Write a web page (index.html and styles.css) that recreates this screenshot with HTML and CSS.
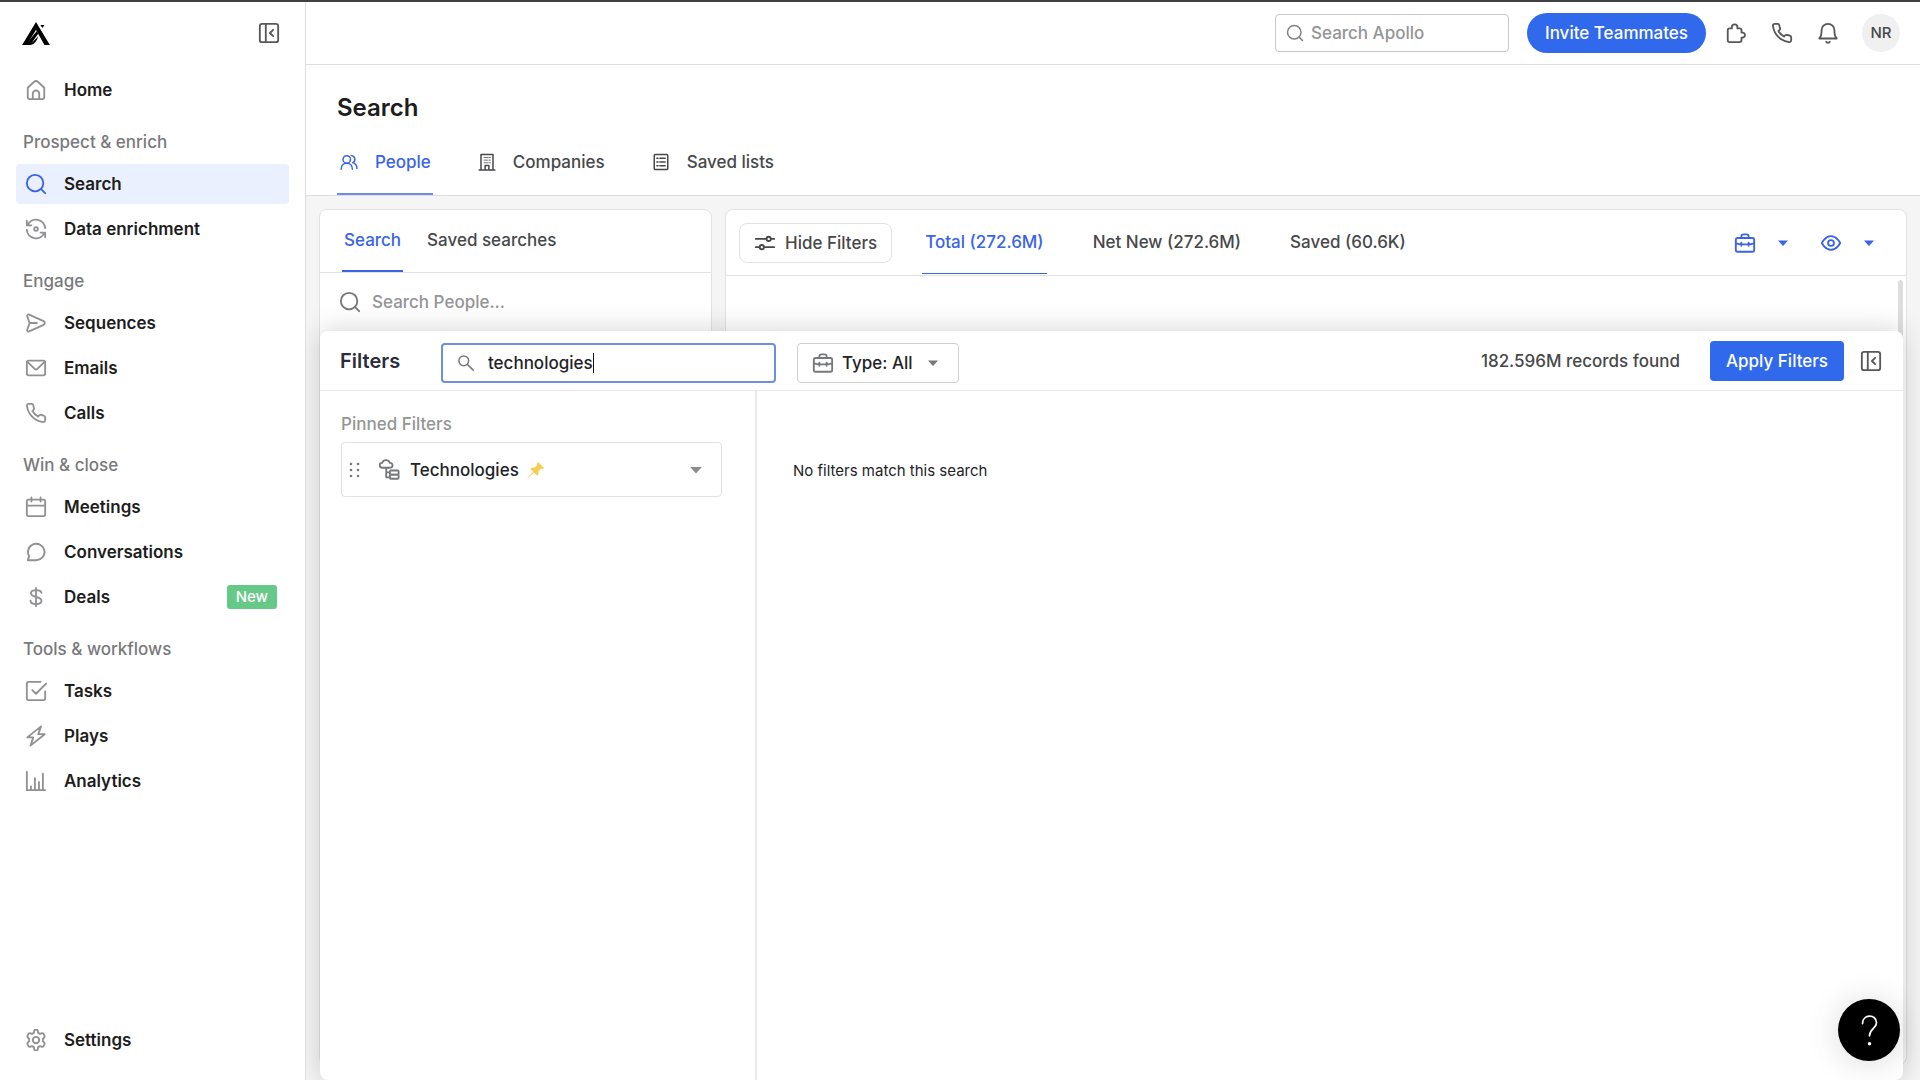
FILE: index.html
```html
<!DOCTYPE html>
<html lang="en">
<head>
<meta charset="utf-8">
<meta name="viewport" content="width=device-width, initial-scale=1">
<title>Search - Apollo</title>
<link rel="stylesheet" href="styles.css">
</head>
<body>
<svg class="sprite" aria-hidden="true">
  <symbol id="i-panel" viewBox="0 0 24 24"><rect x="2" y="2" width="20" height="20" rx="2.5"/><path d="M8.5 2v20M16.500 8.500L13 12l3.500 3.500"/></symbol>
  <symbol id="i-search" viewBox="0 0 24 24"><circle cx="11" cy="11" r="9"/><path d="M17.500 17.500L22 22"/></symbol>
  <symbol id="i-phone" viewBox="0 0 24 24"><path d="M22 16.900v3a2 2 0 0 1-2.200 2A19.800 19.800 0 0 1 11.200 18.900a19.500 19.500 0 0 1-6-6A19.800 19.800 0 0 1 2.100 4.200 2 2 0 0 1 4.100 2h3a2 2 0 0 1 2 1.700c.13 1 .36 1.900.7 2.800a2 2 0 0 1-.45 2.100L8.100 9.900a16 16 0 0 0 6 6l1.300-1.300a2 2 0 0 1 2.100-.45c.9.340 1.900.570 2.800.7A2 2 0 0 1 22 16.900z"/></symbol>
  <symbol id="i-case" viewBox="0 0 24 24"><rect x="2" y="6.500" width="20" height="15" rx="2"/><path d="M8 6.500V5a2.500 2.500 0 0 1 2.500-2.500h3A2.500 2.500 0 0 1 16 5v1.500M2.500 12.500c2 .8 3.500 1 6 1M9 13.500h6M15.500 13.500c2.500 0 4-.2 6-1M8 11.500v3.500M16 11.500v3.500"/></symbol>
  <symbol id="i-caret" viewBox="0 0 12 12"><path d="M1 3.500h10L6 9z"/></symbol>
</svg>
<div class="app">
  <aside class="sidebar">
    <div class="brand">
      <a href="#" aria-label="Apollo"><svg class="logo" viewBox="0 0 82 68"><path d="M41 0L82 68H66L41 24L13 68H0z"/><path d="M10 68L43 27L48 34L28 62L48 42L44 52Q36 68 24 68z"/><path d="M54 9h12l-6 9z"/></svg></a>
      <button class="icon-btn" aria-label="Collapse sidebar"><svg class="icon"><use href="#i-panel"/></svg></button>
    </div>
    <nav class="nav">
      <a class="nav-item" href="#"><svg class="icon" viewBox="0 0 24 24"><path d="M3 9.500L10 3a3 3 0 0 1 4 0l7 6.500V20a2 2 0 0 1-2 2H5a2 2 0 0 1-2-2zM8.500 22v-6a3.500 3.500 0 0 1 7 0v6"/></svg>Home</a>
      <h2 class="nav-label">Prospect &amp; enrich</h2>
      <a class="nav-item active" href="#"><svg class="icon"><use href="#i-search"/></svg>Search</a>
      <a class="nav-item" href="#"><svg class="icon" viewBox="0 0 24 24"><path d="M2 3v5h5M3 7.500A10 10 0 0 1 22 11M22 21v-5h-5M21 16.500A10 10 0 0 1 2 13"/><circle cx="12" cy="12" r="2"/></svg>Data enrichment</a>
      <h2 class="nav-label">Engage</h2>
      <a class="nav-item" href="#"><svg class="icon" viewBox="0 0 24 24"><path d="M4.500 2.800l15.800 7.200a2.200 2.200 0 0 1 0 4L4.500 21.200a1.500 1.500 0 0 1-2-2L5 12 2.500 4.800a1.500 1.500 0 0 1 2-2zM5 12h8"/></svg>Sequences</a>
      <a class="nav-item" href="#"><svg class="icon" viewBox="0 0 24 24"><rect x="2" y="4" width="20" height="16" rx="2"/><path d="M2.500 5l8 8a2 2 0 0 0 3 0l8-8"/></svg>Emails</a>
      <a class="nav-item" href="#"><svg class="icon"><use href="#i-phone"/></svg>Calls</a>
      <h2 class="nav-label">Win &amp; close</h2>
      <a class="nav-item" href="#"><svg class="icon" viewBox="0 0 24 24"><rect x="2" y="4" width="20" height="18" rx="2"/><path d="M2 10.500h20M7 1.500V6M17 1.500V6"/></svg>Meetings</a>
      <a class="nav-item" href="#"><svg class="icon" viewBox="0 0 24 24"><path d="M3 21l1.500-4.500A9 9 0 1 1 12 21z"/></svg>Conversations</a>
      <a class="nav-item" href="#"><svg class="icon" viewBox="0 0 24 24"><path d="M12 2v20M18 7.500C17.500 5 15 4.500 12 4.500S6.500 5.500 6.500 8s2 3.200 5.500 4 6 1.500 6 4.200-2.800 3.600-6 3.600-5.700-.8-6-3.800"/></svg>Deals<span class="badge">New</span></a>
      <h2 class="nav-label">Tools &amp; workflows</h2>
      <a class="nav-item" href="#"><svg class="icon" viewBox="0 0 24 24"><path d="M22 12.500V20a2 2 0 0 1-2 2H4a2 2 0 0 1-2-2V4a2 2 0 0 1 2-2h13M8 11l4 4L23 4"/></svg>Tasks</a>
      <a class="nav-item" href="#"><svg class="icon" viewBox="0 0 24 24"><path d="M17.500 1.500L2.500 13.500H9L6 22.500 21.500 10H14.500z"/></svg>Plays</a>
      <a class="nav-item" href="#"><svg class="icon" viewBox="0 0 24 24"><path d="M2 2v20h20M6.500 22v-4M10.800 22V9M15.200 22v-9M19.500 22V4"/></svg>Analytics</a>
    </nav>
    <a class="nav-item settings" href="#"><svg class="icon" viewBox="0 0 24 24"><path d="M10 2.500a2 2 0 0 1 4 0l.3 1.700 2 1.100 1.700-.6a2 2 0 0 1 2.300.8l.9 1.700a2 2 0 0 1-.5 2.300L19.500 10.800v2.400l1.200 1.300a2 2 0 0 1 .5 2.300l-.9 1.700a2 2 0 0 1-2.300.8l-1.700-.6-2 1.100-.3 1.700a2 2 0 0 1-4 0l-.3-1.700-2-1.100-1.700.6a2 2 0 0 1-2.300-.8l-.9-1.700a2 2 0 0 1 .5-2.300l1.200-1.300v-2.400L3.300 9.500a2 2 0 0 1-.5-2.300l.9-1.700A2 2 0 0 1 6 4.700l1.700.6 2-1.100z"/><circle cx="12" cy="12" r="3.500"/></svg>Settings</a>
  </aside>

  <main class="main">
    <header class="topbar">
      <label class="global-search"><svg class="icon small"><use href="#i-search"/></svg><input type="search" placeholder="Search Apollo" aria-label="Search Apollo"></label>
      <button class="btn pill">Invite Teammates</button>
      <button class="icon-btn" aria-label="Extensions"><svg class="icon" viewBox="0 0 24 24"><path d="M3 9a2 2 0 0 1 2-2h2.500V5.500a3 3 0 0 1 6 0V7H16a2 2 0 0 1 2 2v2.500h1.500a2.800 2.800 0 0 1 0 5.500H18v3a2 2 0 0 1-2 2H5a2 2 0 0 1-2-2z"/></svg></button>
      <button class="icon-btn" aria-label="Dialer"><svg class="icon"><use href="#i-phone"/></svg></button>
      <button class="icon-btn" aria-label="Notifications"><svg class="icon" viewBox="0 0 24 24"><path d="M2.500 18C5 15.500 5 13.500 5 9a7 7 0 0 1 14 0c0 4.500 0 6.500 2.500 9zM10 21.500a2.200 2.200 0 0 0 4 0"/></svg></button>
      <button class="avatar">NR</button>
    </header>

    <section class="page-head">
      <h1>Search</h1>
      <nav class="page-tabs">
        <a class="tab active" href="#"><svg class="icon small" viewBox="0 0 24 24"><circle cx="9" cy="8.500" r="5"/><path d="M1.500 21.500c0-4.500 3-8 7.500-8s7.500 3.500 7.500 8M15 3.500a5 5 0 0 1 2 9.500M18.500 13.500c2.500 1 4 4 4 7"/></svg>People</a>
        <a class="tab" href="#"><svg class="icon small" viewBox="0 0 24 24"><path d="M1.500 22.500h21M4 22V2h16v20M9.500 22v-5.500h5V22"/><path class="dots" d="M8 6h2M11 6h2M14.500 6h2M8 9.500h2M11 9.500h2M14.500 9.500h2M8 13h2M11 13h2M14.500 13h2"/></svg>Companies</a>
        <a class="tab" href="#"><svg class="icon small" viewBox="0 0 24 24"><rect x="3" y="2" width="18" height="20" rx="1.500"/><path d="M10.500 7h7M10.500 12h7M10.500 17h7M6.500 7H8M6.500 12H8M6.500 17H8"/></svg>Saved lists</a>
      </nav>
    </section>

    <div class="workspace">
      <section class="card search-card">
        <nav class="card-tabs">
          <a class="card-tab active" href="#">Search</a>
          <a class="card-tab" href="#">Saved searches</a>
        </nav>
        <label class="people-search"><svg class="icon"><use href="#i-search"/></svg><input type="search" placeholder="Search People..." aria-label="Search People"></label>
      </section>

      <section class="card results-card">
        <div class="results-bar">
          <button class="hide-filters"><svg class="icon" viewBox="0 0 24 24"><path d="M2 7.500h11.500M18.500 7.500H22M2 16.500h4M11 16.500h11"/><circle cx="16" cy="7.500" r="2.300"/><circle cx="8.500" cy="16.500" r="2.300"/></svg>Hide Filters</button>
          <nav class="result-tabs">
            <a class="result-tab active" href="#">Total (272.6M)</a>
            <a class="result-tab" href="#">Net New (272.6M)</a>
            <a class="result-tab" href="#">Saved (60.6K)</a>
          </nav>
          <div class="view-tools">
            <button class="tool" aria-label="Job options"><svg class="icon"><use href="#i-case"/></svg><svg class="caret"><use href="#i-caret"/></svg></button>
            <button class="tool" aria-label="View options"><svg class="icon" viewBox="0 0 24 24"><path d="M2 12s3.500-7.500 10-7.500S22 12 22 12s-3.500 7.500-10 7.500S2 12 2 12z"/><circle cx="12" cy="12" r="3.200"/></svg><svg class="caret"><use href="#i-caret"/></svg></button>
          </div>
        </div>
        <div class="results-body"><div class="scroll-thumb"></div></div>
      </section>

      <section class="filters-panel">
        <header class="filters-head">
          <h2>Filters</h2>
          <label class="filter-search">
            <svg class="icon small" viewBox="0 0 24 24"><circle cx="9" cy="9" r="6.500"/><path d="M14 14l7.500 7.500"/></svg>
            <input type="text" value="technologies" aria-label="Search filters"><span class="text-cursor"></span>
          </label>
          <label class="type-select">
            <svg class="icon"><use href="#i-case"/></svg>
            <select aria-label="Filter type"><option>Type: All</option></select>
            <svg class="caret"><use href="#i-caret"/></svg>
          </label>
          <p class="records">182.596M records found</p>
          <button class="btn apply">Apply Filters</button>
          <button class="icon-btn" aria-label="Collapse filters"><svg class="icon"><use href="#i-panel"/></svg></button>
        </header>
        <div class="filters-body">
          <div class="pinned">
            <h3>Pinned Filters</h3>
            <button class="pinned-item">
              <svg class="grip" viewBox="0 0 12 16"><circle cx="2" cy="2" r="1.300"/><circle cx="9" cy="2" r="1.300"/><circle cx="2" cy="8" r="1.300"/><circle cx="9" cy="8" r="1.300"/><circle cx="2" cy="14" r="1.300"/><circle cx="9" cy="14" r="1.300"/></svg>
              <svg class="icon" viewBox="0 0 24 24"><path d="M4.500 9.500a2.600 2.600 0 0 1 0-5.200 4.500 4.500 0 0 1 8.500 0 2.600 2.600 0 0 1 .5 5.200zM9 9.500V20h4M9 14.500h4"/><rect x="13" y="12.500" width="9.500" height="4.500" rx="1"/><rect x="13" y="17" width="9.500" height="4.500" rx="1"/></svg>
              <span>Technologies</span>
              <svg class="pin" viewBox="0 0 16 16"><path d="M10 0L16 6 14.500 7 13 6.800 10.500 9.300 10.300 12.500 9 13.500 6 10.500 .5 15.500 0 15 5.200 9.700 2.500 7 3.500 5.700 6.700 5.500 9.200 3 9 1.500z"/></svg>
              <svg class="caret"><use href="#i-caret"/></svg>
            </button>
          </div>
          <div class="matches"><p>No filters match this search</p></div>
        </div>
      </section>
    </div>
  </main>
</div>
<button class="help" aria-label="Help"><svg viewBox="0 0 24 40"><path d="M4 12C4 1 20 1 20 11c0 7-8 7-8 15"/><circle cx="12" cy="35" r="1"/></svg></button>
</body>
</html>
```
FILE: styles.css
```css
* { box-sizing: border-box; }
body {
  margin: 0;
  border-top: 2px solid #403f41;
  font: 500 17px/24px Inter, "Liberation Sans", sans-serif;
  color: #47484a;
  background: #fff;
}
a { color: inherit; text-decoration: none; }
h1, h2, h3, p { margin: 0; font-weight: 500; font-size: 17px; }
button, input, select { font: inherit; color: inherit; background: none; border: 0; padding: 0; margin: 0; outline: 0; }
button { cursor: pointer; }
select { appearance: none; }
input { min-width: 0; width: 100%; }
input::placeholder { color: #949596; opacity: 1; }
.sprite { display: none; }
.icon { width: 24px; height: 24px; padding: 1px; flex: none; fill: none; stroke: currentColor; stroke-width: 2; stroke-linecap: round; stroke-linejoin: round; }
.icon.small { width: 20px; height: 20px; }
.caret { width: 12px; height: 12px; flex: none; fill: currentColor; }
.icon-btn { display: flex; color: #57585a; }

.app { display: flex; height: calc(100vh - 2px); }

.sidebar { flex: none; width: 306px; display: flex; flex-direction: column; padding: 16px 16px 20px; border-right: 1px solid #dededf; }
.brand { display: flex; justify-content: space-between; align-items: center; height: 30px; padding: 0 8px 0 6px; }
.brand a { display: flex; }
.logo { width: 28px; height: 23px; fill: #000; }
.nav { display: flex; flex-direction: column; gap: 5px; padding-top: 22px; }
.nav-item { display: flex; align-items: center; gap: 16px; height: 40px; padding: 0 12px 0 8px; border-radius: 4px; font-weight: 600; color: #1d1d20; }
.nav-item .icon { color: #919194; }
.nav-item.active { background: #eaf0fd; }
.nav-item.active .icon { color: #3a63e8; }
.nav-label { height: 44px; padding: 15px 7px 0; color: #79797c; }
.badge { margin-left: auto; padding: 0 9px; border-radius: 3px; background: #67c988; color: #fff; font-size: 15px; font-weight: 500; }
.settings { margin-top: auto; }

.main { flex: 1; min-width: 0; display: flex; flex-direction: column; overflow: hidden; }
.topbar { flex: none; display: flex; align-items: center; justify-content: flex-end; gap: 22px; height: 63px; padding: 0 20px; border-bottom: 1px solid #dededf; }
.global-search { display: flex; align-items: center; gap: 6px; width: 234px; height: 38px; margin-right: -4px; padding: 0 9px; border: 1px solid #c6c7c9; border-radius: 4px; color: #808184; }
.btn { height: 40px; padding: 0 16px; border-radius: 4px; background: #3069ec; color: #fff; font-weight: 500; }
.btn.pill { padding: 0 18px; border-radius: 20px; margin-right: -4px; }
.avatar { width: 38px; height: 38px; border-radius: 50%; background: #f0f0f1; font-size: 15px; }

.page-head { flex: none; padding: 27px 31px 0; border-bottom: 1px solid #dededf; }
.page-head h1 { font-size: 24px; line-height: 32px; font-weight: 600; color: #1d1d20; }
.page-tabs { display: flex; gap: 42px; margin-top: 7px; }
.tab { display: flex; align-items: center; gap: 16px; height: 64px; padding: 0 2px; border-bottom: 2px solid transparent; }
.tab .dots { stroke-width: 1; }
.tab.active { color: #3a63e8; border-color: #6c8fe0; }

.workspace { position: relative; flex: 1; min-height: 0; display: flex; gap: 13px; padding: 13px 13px 15px; background: #f5f5f6; }
.card { background: #fff; border: 1px solid #e2e2e4; border-radius: 8px; }
.search-card { flex: none; width: 393px; }
.card-tabs { display: flex; gap: 22px; padding: 0 22px; border-bottom: 1px solid #e2e2e4; }
.card-tab { height: 62px; padding: 18px 2px 0; border-bottom: 2px solid transparent; }
.card-tab.active { color: #3a63e8; border-color: #3a63e8; }
.people-search { display: flex; align-items: center; gap: 10px; height: 58px; padding: 0 18px; color: #77787a; }
.results-card { flex: 1; min-width: 0; }
.results-bar { display: flex; align-items: center; gap: 30px; height: 66px; padding: 0 31px 0 13px; border-bottom: 1px solid #e2e2e4; }
.hide-filters { display: flex; align-items: center; gap: 8px; height: 40px; padding: 0 14px 0 13px; border: 1px solid #e2e2e4; border-radius: 8px; }
.result-tabs { display: flex; gap: 43px; }
.result-tab { height: 62px; padding: 18px 3px 0; border-bottom: 1px solid transparent; white-space: nowrap; }
.result-tab.active { color: #3a63e8; border-color: #3a63e8; }
.view-tools { display: flex; gap: 30px; margin-left: auto; color: #3a63e8; }
.tool { display: flex; align-items: center; gap: 20px; }
.results-body { display: flex; justify-content: flex-end; padding: 4px 3px; }
.scroll-thumb { width: 5px; height: 400px; border-radius: 3px; background: #dededf; }

.filters-panel { position: absolute; top: 135px; left: 14px; right: 17px; bottom: 0; display: flex; flex-direction: column; border-radius: 8px; background: #fff; box-shadow: 0 0 28px rgba(0, 0, 0, .18); }
.filters-head { flex: none; display: flex; align-items: center; height: 60px; padding: 0 20px; border-bottom: 1px solid #e8e9ea; }
.filters-head h2 { width: 101px; font-size: 20px; font-weight: 600; color: #2b2d3b; }
.filter-search { display: flex; align-items: center; width: 335px; height: 40px; margin-top: 4px; padding: 0 13px; border: 2px solid #6c8fe0; border-radius: 4px; color: #77787a; }
.filter-search input { field-sizing: content; width: auto; margin-left: 12px; color: #232327; }
.text-cursor { width: 1px; height: 20px; background: #111; }
.type-select { display: flex; align-items: center; gap: 7px; height: 40px; margin: 4px auto 0 21px; padding: 0 19px 0 13px; border: 1px solid #cfd0d2; border-radius: 4px; color: #77787a; }
.type-select select { color: #232327; }
.type-select .caret { margin-left: 7px; }
.records { margin-right: 30px; }
.apply { margin-right: 15px; }
.filters-body { flex: 1; display: flex; }
.pinned { flex: none; width: 437px; padding: 21px 33px 0 21px; border-right: 2px solid #e8e9ea; }
.pinned h3 { color: #949596; }
.pinned-item { display: flex; align-items: center; width: 100%; height: 55px; margin-top: 6px; padding: 0 18px 0 7px; border: 1px solid #e2e2e4; border-radius: 4px; color: #77787a; }
.pinned-item .icon { margin: 0 9px 0 16px; }
.pinned-item span { color: #232327; }
.grip { width: 12px; height: 16px; fill: currentColor; }
.pin { width: 16px; height: 16px; margin-left: 9px; fill: #f6cd4f; }
.pinned-item .caret { width: 14px; height: 14px; margin-left: auto; fill: #8b8c8e; }
.matches { flex: 1; padding: 68px 36px; }
.matches p { font-size: 15px; font-weight: 400; color: #232327; }

.help { position: fixed; right: 20px; bottom: 19px; width: 62px; height: 62px; display: flex; align-items: center; justify-content: center; border-radius: 50%; background: #000; box-shadow: 0 2px 32px rgba(0, 0, 0, .15); }
.help svg { width: 21px; height: 35px; fill: none; stroke: #fff; stroke-width: 2; stroke-linecap: round; }
```
